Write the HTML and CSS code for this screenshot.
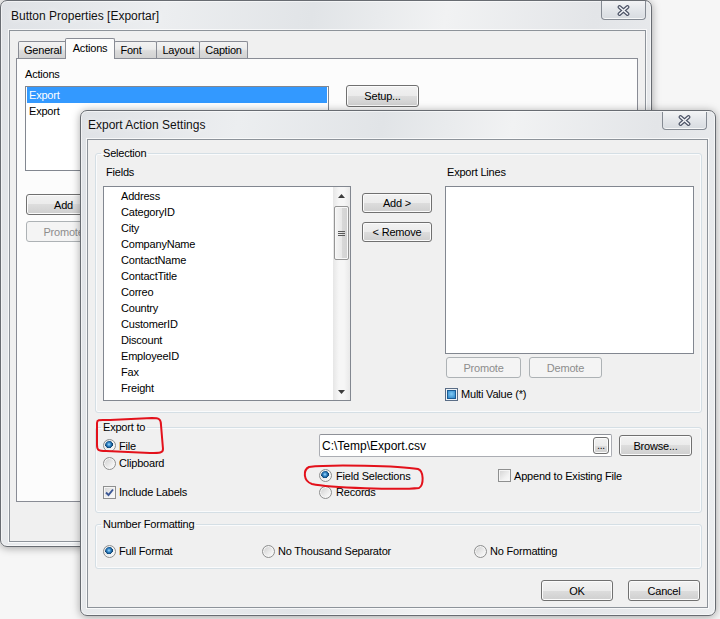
FILE: index.html
```html
<!DOCTYPE html>
<html>
<head>
<meta charset="utf-8">
<title>Export Action Settings</title>
<link rel="stylesheet" href="styles.css">
</head>
<body>

<div class="win back-win">
  <div class="titlebar">
    <span class="title">Button Properties [Exportar]</span>
    <span class="close"><svg width="13" height="11" viewBox="0 0 13 11"><path class="x-out" d="M2.5 2 L10.5 9 M10.5 2 L2.5 9"/><path class="x-in" d="M2.5 2 L10.5 9 M10.5 2 L2.5 9"/></svg></span>
  </div>
  <div class="client">
    <div class="tabs">
      <span class="tab">General</span>
      <span class="tab on">Actions</span>
      <span class="tab">Font</span>
      <span class="tab">Layout</span>
      <span class="tab">Caption</span>
    </div>
    <div class="pane">
      <div class="lbl">Actions</div>
      <div class="actions-row">
        <div class="listbox actions-list">
          <div class="item picked">Export</div>
          <div class="item">Export</div>
        </div>
        <button class="btn setup">Setup...</button>
      </div>
      <button class="btn side-btn add">Add</button>
      <button class="btn side-btn" disabled>Promote</button>
    </div>
  </div>
</div>

<div class="win front-win">
  <div class="titlebar">
    <span class="title">Export Action Settings</span>
    <span class="close"><svg width="13" height="11" viewBox="0 0 13 11"><path class="x-out" d="M2.5 2 L10.5 9 M10.5 2 L2.5 9"/><path class="x-in" d="M2.5 2 L10.5 9 M10.5 2 L2.5 9"/></svg></span>
  </div>
  <div class="client">

    <fieldset class="group selection">
      <legend>Selection</legend>
      <div class="sel-grid">
        <div class="lbl fields-lbl">Fields</div>
        <div></div>
        <div class="lbl lines-lbl">Export Lines</div>

        <div class="listbox fields">
          <div class="items">
            <div class="item">Address</div>
            <div class="item">CategoryID</div>
            <div class="item">City</div>
            <div class="item">CompanyName</div>
            <div class="item">ContactName</div>
            <div class="item">ContactTitle</div>
            <div class="item">Correo</div>
            <div class="item">Country</div>
            <div class="item">CustomerID</div>
            <div class="item">Discount</div>
            <div class="item">EmployeeID</div>
            <div class="item">Fax</div>
            <div class="item">Freight</div>
          </div>
          <div class="vscroll">
            <span class="arrow"><svg width="7" height="4" viewBox="0 0 7 4"><path d="M0 4 L3.5 0 L7 4 Z"/></svg></span>
            <span class="thumb"><span class="grip"></span></span>
            <span class="track"></span>
            <span class="arrow"><svg width="7" height="4" viewBox="0 0 7 4"><path d="M0 0 L7 0 L3.5 4 Z"/></svg></span>
          </div>
        </div>

        <div class="mid-btns">
          <button class="btn">Add &gt;</button>
          <button class="btn">&lt; Remove</button>
        </div>

        <div class="lines-col">
          <div class="listbox lines"></div>
          <div class="move-btns">
            <button class="btn promote" disabled>Promote</button>
            <button class="btn demote" disabled>Demote</button>
          </div>
          <label class="opt multi"><span class="cb mixed"></span>Multi Value (*)</label>
        </div>
      </div>
    </fieldset>

    <fieldset class="group export-to">
      <legend>Export to</legend>
      <div class="export-grid">
        <label class="opt file"><span class="radio on"></span>File</label>
        <div class="path">
          <span class="path-text">C:\Temp\Export.csv</span>
          <button class="btn dots">...</button>
        </div>
        <button class="btn browse">Browse...</button>
        <label class="opt clip"><span class="radio"></span>Clipboard</label>
        <label class="opt fieldsel"><span class="radio on"></span>Field Selections</label>
        <label class="opt append"><span class="cb"></span>Append to Existing File</label>
        <label class="opt labels"><span class="cb"><svg width="11" height="11" viewBox="0 0 11 11"><path d="M2 5.5 L4.5 8 L9 2.5"/></svg></span>Include Labels</label>
        <label class="opt records"><span class="radio"></span>Records</label>
      </div>
    </fieldset>

    <fieldset class="group numfmt">
      <legend>Number Formatting</legend>
      <div class="num-grid">
        <label class="opt"><span class="radio on"></span>Full Format</label>
        <label class="opt"><span class="radio"></span>No Thousand Separator</label>
        <label class="opt"><span class="radio"></span>No Formatting</label>
      </div>
    </fieldset>

    <div class="dlg-btns">
      <button class="btn">OK</button>
      <button class="btn">Cancel</button>
    </div>
  </div>
</div>

<!-- red marks drawn over the screenshot -->
<svg class="marks" width="720" height="619" viewBox="0 0 720 619">
  <path d="M97 423 C97 419 100 420 110 420 L152 418 C159 418 161 419 161 425 L163 449 C163 453 160 453 150 453 L106 451 C98 451 97 450 97 445 Z"/>
  <path d="M309 467 C330 464 400 466 418 469 C424 471 424 485 419 488 C400 490 330 488 312 484 C303 481 303 470 309 467 Z"/>
</svg>

</body>
</html>
```

FILE: styles.css
```css
/* Windows 7 style dialogs, two windows over a plain desktop */
body {
    margin: 0;
    width: 720px;
    height: 619px;
    overflow: hidden;
    position: relative;
    background: #f6f6f6;
    font-family: "Liberation Sans", Arial, sans-serif;
    font-size: 11px;
    letter-spacing: -0.2px;
    color: #000;
}

/* ---- window frame ---- */
.win {
    position: absolute;
    box-sizing: border-box;
    display: flex;
    flex-direction: column;
    border: 1px solid #686c72;
    border-radius: 7px;
    background: linear-gradient(100deg, #dfe2e6 0%, #eceef0 22%, #e1e4e7 42%, #f1f2f3 60%, #e3e5e8 80%, #eceef0 100%);
    box-shadow: inset 0 0 0 1px rgba(255,255,255,.55), 0 1px 9px rgba(0,0,0,.35);
}
.back-win {
    left: 0;
    top: 0;
    width: 652px;
    height: 547px;
    padding: 0 5px 4px 8px;
}
.front-win {
    left: 80px;
    top: 110px;
    width: 636px;
    height: 506px;
    padding: 0 7px 7px 6px;
}
.titlebar {
    display: flex;
    align-items: flex-start;
    flex: none;
}
.back-win .titlebar { height: 29px; }
.front-win .titlebar { height: 28px; }
.title {
    font-size: 12px;
    line-height: 16px;
    letter-spacing: 0;
    color: #111;
    text-shadow: 0 0 6px #fff;
}
.back-win .title { margin: 7px 0 0 2px; }
.front-win .title { margin: 6px 0 0 1px; }
.close {
    margin-left: auto;
    width: 45px;
    height: 19px;
    box-sizing: border-box;
    border: 1px solid #848a93;
    border-top: none;
    border-radius: 0 0 4px 4px;
    background: linear-gradient(#f2f3f5, #e3e6ea 50%, #d7dbe0);
    box-shadow: inset 0 -1px 0 #f7f8f9;
    display: flex;
    align-items: center;
    justify-content: center;
}
.front-win .close { margin-top: 1px; margin-right: 1px; height: 18px; }
.x-out { stroke: #4c5366; stroke-width: 3.8; stroke-linecap: round; fill: none; }
.x-in { stroke: #f5f6f9; stroke-width: 1.5; stroke-linecap: round; fill: none; }

.client {
    flex: 1;
    display: flex;
    flex-direction: column;
    border: 1px solid #8d939a;
    background: #f0f0f0;
    box-shadow: 0 0 0 1px rgba(255,255,255,.7);
    min-height: 0;
}

/* ---- common controls ---- */
.lbl { line-height: 14px; }
.btn {
    font: inherit;
    letter-spacing: inherit;
    color: #000;
    height: 21px;
    padding: 0;
    box-sizing: border-box;
    border: 1px solid #707070;
    border-radius: 3px;
    background: linear-gradient(#f2f2f2, #ebebeb 50%, #dddddd 50%, #cfcfcf);
    box-shadow: inset 0 0 0 1px #fbfbfb;
}
.btn:disabled {
    color: #8d8d8d;
    border-color: #adb2b5;
    background: #f4f4f4;
    box-shadow: none;
}
.listbox {
    box-sizing: border-box;
    border: 1px solid #828790;
    background: #fff;
}
.item {
    height: 16px;
    line-height: 16px;
    white-space: nowrap;
}
.opt {
    display: flex;
    align-items: center;
    gap: 3px;
    white-space: nowrap;
    line-height: 14px;
}
.radio {
    flex: none;
    width: 13px;
    height: 13px;
    box-sizing: border-box;
    border-radius: 50%;
    border: 1px solid #8e8f8f;
    background: linear-gradient(135deg, #cdcdcd, #f2f2f2 70%, #fbfbfb);
    box-shadow: inset 0 0 0 1px #f6f6f6;
}
.radio.on {
    background:
        radial-gradient(circle at 45% 40%, #a8e0ff 0, #3d8fd0 1.6px, #135289 3.2px, #0c3f6c 3.7px, transparent 4px),
        linear-gradient(135deg, #cdcdcd, #f2f2f2 70%, #fbfbfb);
}
.cb {
    flex: none;
    width: 13px;
    height: 13px;
    box-sizing: border-box;
    border: 1px solid #8e8f8f;
    background: linear-gradient(135deg, #d2d2d2, #f0f0f0 60%, #fcfcfc);
    box-shadow: inset 0 0 0 1px #f5f5f5;
    display: flex;
    align-items: center;
    justify-content: center;
}
.cb svg path { fill: none; stroke: #3b5795; stroke-width: 1.9; }
.cb.mixed {
    border-color: #5a6d86;
    box-shadow: inset 0 0 0 1px #eef2f6, inset 0 0 0 2px #1b5c94;
    background: radial-gradient(circle at 50% 45%, #7fcaf5, #3a8fce 55%, #1f66a3);
}

/* ---- back window: tabs ---- */
.tabs {
    display: flex;
    align-items: flex-end;
    height: 20px;
    margin: 7px 0 0 8px;
    position: relative;
    z-index: 1;
}
.tab {
    height: 17px;
    min-width: 43px;
    box-sizing: border-box;
    padding: 1px 5px 0;
    line-height: 15px;
    border: 1px solid #898c95;
    border-bottom: none;
    border-radius: 2px 2px 0 0;
    margin-right: -1px;
    background: linear-gradient(#f3f3f3, #ebebeb 45%, #dcdcdc 55%, #d2d2d2);
}
.tab.on {
    height: 21px;
    margin: 0 -1px -1px -2px;
    padding: 2px 7px 0;
    background: #fcfcfc;
    position: relative;
}
.pane {
    flex: 1;
    margin: 0 7px 39px 6px;
    border: 1px solid #898c95;
    background: #fcfcfc;
    padding: 8px 0 0 8px;
    display: flex;
    flex-direction: column;
    align-items: flex-start;
}
.actions-row {
    display: flex;
    align-items: flex-start;
    margin-top: 5px;
}
.actions-list {
    width: 304px;
    height: 85px;
}
.actions-list .item { padding-left: 3px; }
.actions-list .item.picked {
    background: #3399ff;
    color: #fff;
    margin: 0 1px;
    padding-left: 2px;
}
.setup {
    width: 73px;
    height: 22px;
    margin: -1px 0 0 17px;
}
.side-btn {
    width: 75px;
    margin-left: 1px;
}
.side-btn.add { margin-top: 23px; margin-bottom: 6px; }

/* ---- front window ---- */
.front-win .client {
    padding: 6px 5px 0 7px;
}
.group {
    margin: 0;
    min-width: 0;
    border: 1px solid #d5dfe5;
    border-radius: 3px;
    box-shadow: inset 0 0 0 1px #fafbfc;
    padding: 0 7px 10px 7px;
}
.group legend {
    padding: 0 2px;
    margin-left: -2px;
    line-height: 14px;
}
.selection { padding-top: 5px; padding-bottom: 11px; }
.export-to { margin-top: 7px; }
.numfmt { margin-top: 4px; padding-top: 13px; }

.sel-grid {
    display: grid;
    grid-template-columns: 248px 1fr 249px;
    grid-template-rows: 21px auto;
}
.fields-lbl { padding-left: 3px; }
.lines-lbl { padding-left: 2px; }
.fields {
    height: 215px;
    display: flex;
}
.fields .items {
    flex: 1;
    padding: 1px 0 0 17px;
}
.vscroll {
    width: 17px;
    display: flex;
    flex-direction: column;
    background: linear-gradient(90deg, #e6e6e6, #f6f6f6 35%, #f6f6f6 65%, #e9e9e9);
}
.arrow {
    height: 17px;
    flex: none;
    display: flex;
    align-items: center;
    justify-content: center;
}
.arrow svg path { fill: #3c3c3c; }
.thumb {
    flex: none;
    height: 54px;
    margin: 2px 1px 0;
    box-sizing: border-box;
    border: 1px solid #959595;
    border-radius: 2px;
    background: linear-gradient(90deg, #f5f5f5, #e9e9e9 50%, #d9d9d9 50%, #d2d2d2);
    box-shadow: inset 0 0 0 1px #f8f8f8;
    display: flex;
    align-items: center;
    justify-content: center;
}
.grip {
    width: 7px;
    height: 5px;
    background: repeating-linear-gradient(#5a5a5a 0 1px, transparent 1px 2px);
}
.track { flex: 1; }

.mid-btns {
    display: flex;
    flex-direction: column;
    gap: 9px;
    padding: 7px 0 0 11px;
}
.mid-btns .btn { width: 70px; height: 20px; }

.lines-col {
    display: flex;
    flex-direction: column;
    align-items: flex-start;
}
.lines {
    width: 249px;
    height: 168px;
}
.move-btns {
    display: flex;
    gap: 8px;
    margin: 3px 0 0 1px;
}
.promote { width: 75px; }
.demote { width: 73px; }
.multi { margin-top: 10px; line-height: 13px; }

.export-grid {
    display: grid;
    grid-template-columns: 216px 179px 114px 82px;
    grid-template-rows: 23px 12px 13px 20px;
    align-items: center;
}
.file { grid-column: 1; grid-row: 1; }
.path {
    grid-column: 2 / 4;
    grid-row: 1;
    height: 23px;
    box-sizing: border-box;
    border: 1px solid #abadb3;
    border-top-color: #8e9198;
    border-radius: 2px;
    background: #fff;
    display: flex;
    align-items: center;
}
.path-text {
    flex: 1;
    font-size: 12px;
    letter-spacing: 0;
    padding-left: 2px;
}
.dots {
    width: 16px;
    height: 17px;
    margin-right: 2px;
    line-height: 12px;
    font-size: 10px;
}
.browse {
    grid-column: 4;
    grid-row: 1;
    width: 73px;
    height: 21px;
    margin-left: 7px;
}
.clip { grid-column: 1; grid-row: 2; }
.fieldsel { grid-column: 2; grid-row: 3; gap: 4px; }
.append { grid-column: 3 / 5; grid-row: 3; }
.labels { grid-column: 1; grid-row: 4; }
.records { grid-column: 2; grid-row: 4; gap: 4px; }

.num-grid {
    display: grid;
    grid-template-columns: 159px 212px auto;
    height: 14px;
    align-items: center;
}

.dlg-btns {
    display: flex;
    justify-content: flex-end;
    gap: 15px;
    margin: 11px 2px 0 0;
}
.dlg-btns .btn { width: 72px; }

/* hand drawn red marks on top */
.marks {
    position: absolute;
    left: 0;
    top: 0;
    pointer-events: none;
}
.marks path {
    fill: none;
    stroke: #e3111b;
    stroke-width: 2;
    stroke-linejoin: round;
}
```
